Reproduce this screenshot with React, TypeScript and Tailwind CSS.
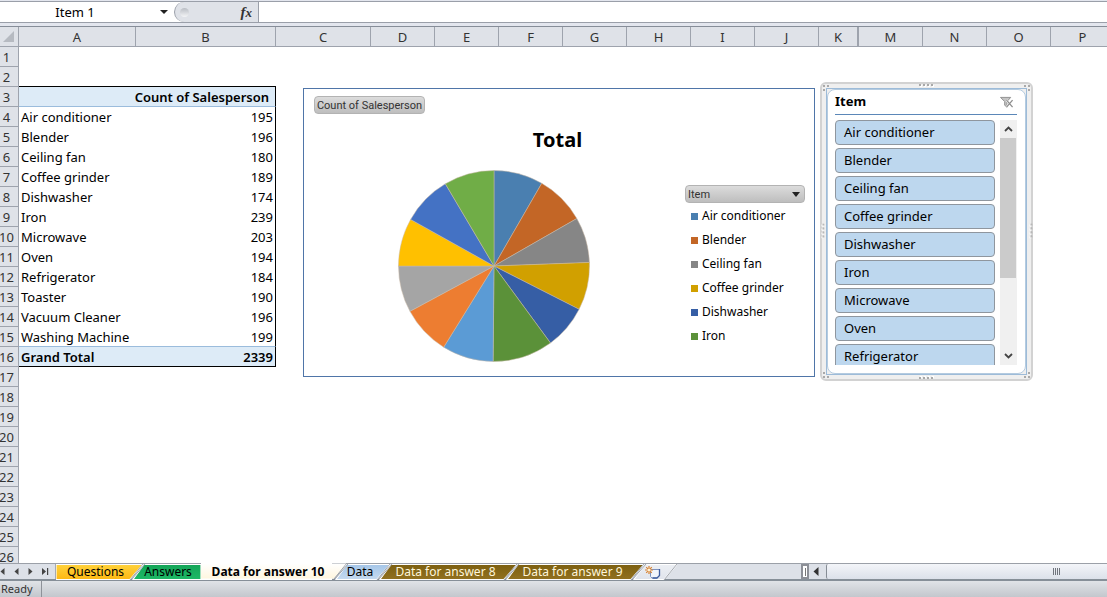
import type { ReactNode } from 'react'

const sales: [string, number][] = [
  ['Air conditioner', 195],
  ['Blender', 196],
  ['Ceiling fan', 180],
  ['Coffee grinder', 189],
  ['Dishwasher', 174],
  ['Iron', 239],
  ['Microwave', 203],
  ['Oven', 194],
  ['Refrigerator', 184],
  ['Toaster', 190],
  ['Vacuum Cleaner', 196],
  ['Washing Machine', 199],
]
const total = 2339
const rowCount = 26

const sliceColors = [
  '#4a7fb0', '#c36626', '#868686', '#d1a000', '#365ea5', '#5b9139',
  '#5b9bd5', '#ed7d31', '#a5a5a5', '#ffc000', '#4472c4', '#70ad47',
]

const columns: [string, string][] = [
  ['A', 'w-[117px]'],
  ['B', 'w-[140px]'],
  ['C', 'w-[95px]'],
  ['D', 'w-16'],
  ['E', 'w-16'],
  ['F', 'w-16'],
  ['G', 'w-16'],
  ['H', 'w-16'],
  ['I', 'w-16'],
  ['J', 'w-16'],
  ['K', 'w-10'],
  ['M', 'w-16'],
  ['N', 'w-16'],
  ['O', 'w-16'],
  ['P', 'w-16'],
]

function FormulaBar() {
  return (
    <div className="flex h-[27px] shrink-0 flex-col border-b border-[#868d98] bg-[#e3e6ee] pt-px">
      <div className="flex h-[22px] border-y border-[#9a9fa9] bg-white">
        <div className="flex w-[174px] items-center">
          <input
            aria-label="Name box"
            defaultValue="Item 1"
            className="w-[150px] bg-transparent text-center text-[13px] leading-5 outline-none"
          />
          <button aria-label="Show names" className="flex h-5 flex-1 items-center justify-end pr-[6px]">
            <svg width="8" height="4" viewBox="0 0 8 4">
              <path d="M0 0H8L4 4Z" fill="#222" />
            </svg>
          </button>
        </div>
        <div className="flex w-[85px] items-center justify-between rounded-l-full border-r border-l border-[#9a9fa9] bg-[#dfe2e8] pr-[6px] pl-[5px]">
          <span className="h-[9px] w-[9px] rounded-full bg-linear-to-b from-[#b9bdc4] to-[#f4f5f7]" />
          <button
            aria-label="Insert function"
            className="font-['Liberation_Serif',serif] text-[15px] leading-5 font-bold text-[#333] italic"
          >
            f<span className="text-[13px]">x</span>
          </button>
        </div>
        <input aria-label="Formula" className="min-w-0 flex-1 bg-white px-2 text-[13px] outline-none" />
      </div>
    </div>
  )
}

function cellClass(row: number, col: number) {
  const inPivot = row >= 3 && row <= 16 && col < 2
  const ruled = col < 2 && [2, 3, 15, 16].includes(row)
  const parts = ['h-5 whitespace-nowrap']
  parts.push(ruled ? 'py-0 pt-px leading-[18px]' : 'py-0 leading-5')
  if (col < 2 && (row === 2 || row === 16)) parts.push('border-b border-b-black')
  if (inPivot && (row === 3 || row === 15)) parts.push('border-b border-b-[#9bbcdc]')
  if (inPivot && (row === 3 || row === 16)) parts.push('bg-[#ddebf7] font-semibold')
  if (inPivot && col === 0) parts.push('pr-0 pl-[2px] text-left')
  if (inPivot && col === 1) parts.push('border-r border-r-black pl-0 text-right')
  if (inPivot && col === 1) parts.push(row === 3 ? 'pr-[6px]' : 'pr-[2px]')
  return parts.join(' ')
}

function cellText(row: number, col: number): ReactNode {
  if (row === 3) return col === 1 ? <span className="flex justify-end">Count of Salesperson</span> : ''
  if (row === 16) return col === 0 ? 'Grand Total' : col === 1 ? total : ''
  if (row > 3 && row < 16 && col < 2) return sales[row - 4][col]
  return ''
}

function Grid() {
  return (
    <table className="w-[1134px] table-fixed border-separate border-spacing-0 text-[13px] text-black">
      <colgroup>
        <col className="w-[19px]" />
        {columns.map(([name, width]) => (
          <col key={name} className={width} />
        ))}
        <col />
      </colgroup>
      <thead>
        <tr className="bg-[#dfe2e8] text-[#333]">
          <th aria-label="Select all" className="h-5 border-r border-b border-[#9ea3ad] p-0">
            <svg width="11" height="11" viewBox="0 0 11 11" className="ml-[3px]">
              <path d="M11 0V11H0Z" fill="#b6bac1" />
            </svg>
          </th>
          {columns.map(([name]) => (
            <th
              key={name}
              className={
                name === 'K'
                  ? 'h-5 border-r-2 border-b border-[#9ea3ad] p-0 pt-px leading-[18px] font-normal'
                  : 'h-5 border-r border-b border-[#9ea3ad] p-0 pt-px leading-[18px] font-normal'
              }
            >
              {name}
            </th>
          ))}
          <th className="border-b border-[#9ea3ad] p-0" />
        </tr>
      </thead>
      <tbody>
        {Array.from({ length: rowCount }, (_, i) => i + 1).map((row) => (
          <tr key={row}>
            <th className="h-5 border-r border-b border-[#9ea3ad] bg-[#dfe2e8] p-0 pt-px leading-[18px] font-normal text-[#333]">
              <span className="flex w-[13px] justify-center">{row}</span>
            </th>
            {columns.map(([name], col) => (
              <td key={name} className={cellClass(row, col)}>
                {cellText(row, col)}
              </td>
            ))}
            <td />
          </tr>
        ))}
      </tbody>
    </table>
  )
}

function Pie() {
  const sum = sales.reduce((s, [, n]) => s + n, 0)
  let start = 0
  const point = (t: number) =>
    `${(96 + 95.5 * Math.sin(t * 2 * Math.PI)).toFixed(2)} ${(96 - 95.5 * Math.cos(t * 2 * Math.PI)).toFixed(2)}`
  return (
    <svg width="192" height="192" viewBox="0 0 192 192" role="img" aria-label="Total by item">
      {sales.map(([name, n], i) => {
        const from = point(start / sum)
        start += n
        return (
          <path
            key={name}
            d={`M96 96L${from}A95.5 95.5 0 0 1 ${point(start / sum)}Z`}
            fill={sliceColors[i]}
            stroke="#c9b9a6"
            strokeWidth="0.5"
          />
        )
      })}
    </svg>
  )
}

function PivotChart() {
  return (
    <section className="absolute top-[61px] left-[303px] flex h-[289px] w-[512px] flex-col border border-[#4f75a8] bg-white pt-[7px] pr-[9px] pl-[10px]">
      <button className="h-[18px] w-[111px] rounded-[4px] border border-[#b3b3b3] bg-linear-to-b from-[#dcdcdc] to-[#bebebe] pt-px font-['Roboto',sans-serif] text-[11px] leading-[15px] whitespace-nowrap text-[#333]">
        Count of Salesperson
      </button>
      <h2 className="mt-3 pr-1 text-center text-[20px] leading-7 font-bold text-black">Total</h2>
      <div className="mt-4 flex items-start justify-between pl-[84px]">
        <Pie />
        <div className="mt-[15px] w-[120px]">
          <button className="flex h-[18px] w-full items-center justify-between rounded-[4px] border border-[#b3b3b3] bg-linear-to-b from-[#dcdcdc] to-[#bebebe] pt-px pr-1 pl-[2px] font-['Roboto',sans-serif] text-[11px] leading-[15px] text-[#333]">
            Item
            <svg width="8" height="5" viewBox="0 0 8 5">
              <path d="M0 0H8L4 5Z" fill="#222" />
            </svg>
          </button>
          <ul className="pt-px text-[12px] text-black">
            {sales.slice(0, 6).map(([name], i) => (
              <li key={name} className="flex h-6 items-center gap-1 pl-[6px] whitespace-nowrap">
                <span className="h-[7px] w-[7px]" style={{ backgroundColor: sliceColors[i] }} />
                {name}
              </li>
            ))}
          </ul>
        </div>
      </div>
    </section>
  )
}

function Grip({ className }: { className: string }) {
  return (
    <svg width="15" height="4" viewBox="0 0 15 4" className={className}>
      {[0, 4, 8, 12].map((x) => (
        <g key={x}>
          <rect x={x} y="0" width="2" height="2" fill="#a9a9a9" />
          <rect x={x + 1} y="1" width="2" height="2" fill="#fff" />
          <rect x={x + 1} y="1" width="1" height="1" fill="#a9a9a9" />
        </g>
      ))}
    </svg>
  )
}

function Corner({ className }: { className: string }) {
  return (
    <svg width="7" height="7" viewBox="0 0 7 7" className={className}>
      <path d="M0 0h2v2h-2zM4 0h2v2h-2zM0 4h2v2h-2z" fill="#a9a9a9" />
    </svg>
  )
}

function Slicer() {
  return (
    <section className="absolute top-[55px] left-[820px] h-[299px] w-[213px] rounded-[6px] border-2 border-[#d2d2d2] bg-[#efefef] px-1 pt-1 pb-[4px]">
      <Corner className="absolute top-px left-px" />
      <Corner className="absolute top-px right-px rotate-90" />
      <Corner className="absolute right-px bottom-px rotate-180" />
      <Corner className="absolute bottom-px left-px -rotate-90" />
      <Grip className="absolute top-0 left-[97px]" />
      <Grip className="absolute bottom-0 left-[97px] -scale-y-100" />
      <Grip className="absolute top-[145px] -left-[7px] rotate-90" />
      <Grip className="absolute top-[145px] -right-[7px] rotate-90" />
      <div className="h-full border border-[#9dbbd8]">
        <div className="flex h-full flex-col rounded-[8px] border border-[#b4cbe0] bg-white pr-[8px] pb-[8px] pl-[7px]">
          <header className="flex h-[25px] shrink-0 items-center justify-between border-b border-[#5b87b8] text-[13px] font-bold text-black">
            Item
            <button aria-label="Clear filter" className="pr-[3px]">
              <svg width="14" height="13" viewBox="0 0 15 14">
                <path d="M0.5 1.5H11.5L7.5 6V12L5 10V6Z" fill="#c4c4c4" stroke="#8d8d8d" />
                <path d="M7 4.5L13.5 12M13.5 4.5L7 12" stroke="#fff" strokeWidth="2.400" />
                <path d="M7 4.5L13.5 12M13.5 4.5L7 12" stroke="#8d8d8d" strokeWidth="1.4" />
              </svg>
            </button>
          </header>
          <div className="mt-[5px] flex min-h-0 flex-1 justify-between">
            <div className="flex w-[160px] flex-col gap-[3px] overflow-hidden">
              {sales.map(([name]) => (
                <button
                  key={name}
                  className="h-[25px] shrink-0 rounded-[4px] border border-[#8f969e] bg-[#bdd7ee] pb-px pl-2 text-left text-[13px] leading-[22px] text-black"
                >
                  {name}
                </button>
              ))}
            </div>
            <div className="flex w-[17px] flex-col bg-[#f0f0f0]">
              <button aria-label="Scroll up" className="flex h-[18px] items-center justify-center">
                <svg width="9" height="6" viewBox="0 0 9 6">
                  <path d="M1 5L4.500 1.500L8 5" fill="none" stroke="#444" strokeWidth="1.800" />
                </svg>
              </button>
              <div className="h-[140px] w-4 bg-[#cbcbcb]" />
              <button aria-label="Scroll down" className="mt-auto flex h-[18px] items-center justify-center">
                <svg width="9" height="6" viewBox="0 0 9 6">
                  <path d="M1 1L4.500 4.500L8 1" fill="none" stroke="#444" strokeWidth="1.800" />
                </svg>
              </button>
            </div>
          </div>
        </div>
      </div>
    </section>
  )
}

type TabProps = {
  id: string
  className: string
  width: number
  from: string
  to: string
  slantLeft?: boolean
  slantRight?: boolean
  plain?: boolean
  label?: string
  children: ReactNode
}

function Tab({ id, className, width, from, to, slantLeft, slantRight, plain, label, children }: TabProps) {
  const l = slantLeft ? 13 : 0
  const r = slantRight ? 13 : 0
  const shape = `M${l} 0.5H${width}L${width - r} 15.5H${slantLeft ? 2 : 0}L${l} 0.5`
  return (
    <button aria-label={label} className={className}>
      <svg className="absolute inset-0" width={width} height="16" viewBox={`0 0 ${width} 16`}>
        <defs>
          <linearGradient id={id} x1="0" y1="0" x2="0" y2="1">
            <stop offset="0" stopColor={from} />
            <stop offset="1" stopColor={to} />
          </linearGradient>
        </defs>
        <path d={shape} fill={`url(#${id})`} stroke={plain ? 'none' : '#fff'} strokeWidth="1.2" />
        {slantLeft && <path d="M0 16L14 0" stroke="#8a9099" strokeWidth="0.8" />}
        {slantRight && <path d={`M${width - 13} 16L${width} 0`} stroke="#8a9099" strokeWidth="0.8" />}
      </svg>
      <span className="relative">{children}</span>
    </button>
  )
}

function SheetTabs() {
  return (
    <div className="flex h-[18px] shrink-0 border-t border-b-2 border-t-[#9ba0a8] border-b-[#868f98] bg-[#dde1e8] text-[12px] leading-[14px]">
      <div className="flex w-14 shrink-0 items-center justify-between border-r border-[#a5aab2] pr-[6px] text-[#333]">
        <button aria-label="First sheet">
          <svg width="5" height="7" viewBox="0 0 5 7"><path d="M4.500 0V7L0.500 3.500Z" fill="#444" /></svg>
        </button>
        <button aria-label="Previous sheet">
          <svg width="5" height="7" viewBox="0 0 5 7"><path d="M4.500 0V7L0.500 3.500Z" fill="#444" /></svg>
        </button>
        <button aria-label="Next sheet">
          <svg width="5" height="7" viewBox="0 0 5 7"><path d="M0.500 0V7L4.500 3.500Z" fill="#444" /></svg>
        </button>
        <button aria-label="Last sheet">
          <svg width="7" height="7" viewBox="0 0 7 7"><path d="M0 0V7L4 3.500ZM5 0h1.200v7h-1.200z" fill="#444" /></svg>
        </button>
      </div>
      <Tab id="t1" width={87} from="#ffd23c" to="#fdb813" slantRight className="relative h-4 w-[87px] shrink-0 pr-2 pb-px text-black">Questions</Tab>
      <Tab id="t2" width={70} from="#13a457" to="#1db966" slantLeft className="relative -ml-3 h-4 w-[70px] shrink-0 pb-px pl-1 text-black">Answers</Tab>
      <Tab id="t3" width={146} from="#ffffff" to="#fff6df" slantRight plain className="relative -mt-px h-[17px] w-[146px] shrink-0 bg-linear-to-r from-white from-90% to-transparent to-90% pr-3 font-bold text-black">Data for answer 10</Tab>
      <Tab id="t4" width={56} from="#a5c6e8" to="#c5daf0" slantLeft slantRight className="relative -ml-[13px] h-4 w-14 shrink-0 pr-1 pb-px text-black">Data</Tab>
      <Tab id="t5" width={139} from="#7c5f10" to="#927120" slantLeft slantRight className="relative -ml-[12px] h-4 w-[139px] shrink-0 pr-1 pb-px text-[#fff6dc]">Data for answer 8</Tab>
      <Tab id="t6" width={139} from="#7c5f10" to="#927120" slantLeft slantRight className="relative -ml-[12px] h-4 w-[139px] shrink-0 pr-1 pb-px text-[#fff6dc]">Data for answer 9</Tab>
      <Tab id="t7" label="Insert worksheet" width={45} from="#eceff4" to="#e0e4ec" slantLeft slantRight className="relative -ml-[12px] flex h-4 w-[45px] shrink-0 items-center justify-center pr-1">
        <svg width="16" height="13" viewBox="0 0 16 13">
          <path d="M5.500 3.500H14.500V9.500L12 12H7L5.500 10.500Z" fill="#f1f5fc" stroke="#7f93be" />
          <path d="M14.500 3V9.500L12 12H7.500" fill="none" stroke="#3f5d9f" strokeWidth="1.300" />
          <path d="M4 0V8M0 4H8M1.200 1.200L6.800 6.800M6.800 1.200L1.200 6.800" stroke="#d9822f" strokeWidth="1.200" />
          <circle cx="4" cy="4" r="1.600" fill="#fff3d8" />
        </svg>
      </Tab>
      <div className="ml-auto flex w-[306px] shrink-0">
        <div className="flex h-[15px] w-2 items-center justify-center border-2 border-[#8d9097] bg-white">
          <span className="h-2 w-px bg-[#777]" />
        </div>
        <button aria-label="Scroll left" className="flex w-[17px] items-center justify-center pr-[3px]">
          <svg width="6" height="9" viewBox="0 0 6 9"><path d="M5.500 0V9L0.500 4.500Z" fill="#333" /></svg>
        </button>
        <div className="flex h-[15px] flex-1 items-center rounded-l-[2px] border-l border-[#868d95] bg-linear-to-b from-[#f3f5f9] to-[#dce1ea] pl-[226px]">
          <span className="flex gap-px">
            <i className="h-[7px] w-px bg-[#70757d]" />
            <i className="h-[7px] w-px bg-[#70757d]" />
            <i className="h-[7px] w-px bg-[#70757d]" />
            <i className="h-[7px] w-px bg-[#70757d]" />
          </span>
        </div>
      </div>
    </div>
  )
}

export default function App() {
  return (
    <div className="flex h-screen flex-col overflow-hidden bg-white font-['Noto_Sans',sans-serif]">
      <FormulaBar />
      <main className="relative min-h-0 flex-1 overflow-hidden">
        <Grid />
        <PivotChart />
        <Slicer />
      </main>
      <SheetTabs />
      <footer className="flex h-4 shrink-0 items-center bg-linear-to-b from-[#e0e3e7] to-[#c3c7cd] text-[12px] leading-4 text-[#333]">
        <span className="w-[42px] border-r border-[#8e9299] pl-px text-[11px]">Ready</span>
      </footer>
    </div>
  )
}
